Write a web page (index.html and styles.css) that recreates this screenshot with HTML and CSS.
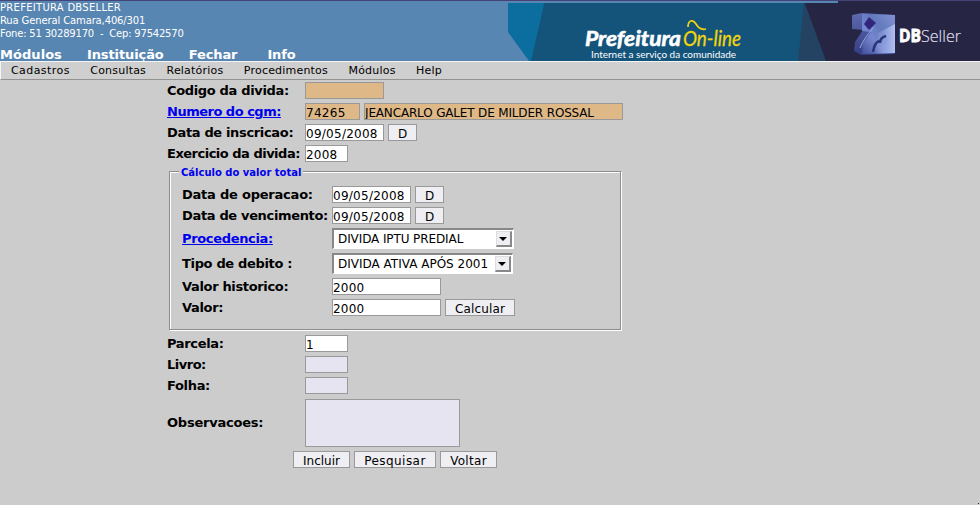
FILE: index.html
```html
<!DOCTYPE html>
<html lang="pt-BR">
<head>
<meta charset="utf-8">
<title>Prefeitura On-line</title>
<link rel="stylesheet" href="styles.css">
</head>
<body>
<header class="header">
  <div class="info">
    <div class="address"><span class="city">PREFEITURA DBSELLER</span><span class="street">Rua General Camara,406/301</span><span class="phone">Fone: 51 30289170 &nbsp;- &nbsp;Cep: 97542570</span></div>
    <nav class="main-nav"><a>Módulos</a><a>Instituição</a><a>Fechar</a><a>Info</a></nav>
  </div>
  <svg class="banner" width="472" height="61" viewBox="508 0 472 61">
    <defs>
      <linearGradient id="cube" x1="0" y1="1" x2="1" y2="0"><stop offset="0" stop-color="#434f9c"/><stop offset=".35" stop-color="#7587cf"/><stop offset=".6" stop-color="#6279bd"/><stop offset="1" stop-color="#8292d2"/></linearGradient>
      <linearGradient id="front" x1="0" y1="0" x2="1" y2="0"><stop offset="0" stop-color="#a9bcf0" stop-opacity="0"/><stop offset="1" stop-color="#b2c0f2"/></linearGradient>
      <linearGradient id="side" x1="0" y1="0" x2="0" y2="1"><stop offset="0" stop-color="#5d6ab0"/><stop offset="1" stop-color="#343e84"/></linearGradient>
      <filter id="soft"><feGaussianBlur stdDeviation=".7"/></filter>
    </defs>
    <path fill="#14547b" d="M508 0h472v61H508z"/>
    <path fill="#0b6e9f" d="M508 0h37L531 61h-3L508 32z"/>
    <path fill="#5886b2" d="M508 32L529 61H508z"/>
    <path fill="#244261" d="M804 3h24v58h-30z"/>
    <path fill="#262543" d="M804 1h176v60H826z"/>
    <path fill="#444479" d="M508 0h472v1H508z"/>
    <path fill="#5886b2" d="M508 1h330v2H508z"/>
    <g filter="url(#soft)">
      <path fill="url(#side)" d="M852 15l10-2 33 2v39l-34 1-7-4 1-9 8-12-11-1z"/>
      <path fill="url(#cube)" d="M862 14l33 1v38l-33 1 1-11 8-11-9-1z"/>
      <path fill="url(#front)" d="M878 33l17-9v29l-20 1z"/>
      <path fill="#33277b" d="M869 17l7 6-7 7-5-6z"/>
      <path fill="none" stroke="#2c3479" stroke-width="2.5" d="M873 52c1-6 3-10 6-11M880 43c0-4 2-6 6-7"/>
      <path fill="none" stroke="#98a9e6" d="M860 48c3-8 8-14 14-21"/>
    </g>
    <text class="brand" x="585" y="46" textLength="96" lengthAdjust="spacingAndGlyphs">Prefeitura</text>
    <text class="online" x="683" y="46" textLength="58" lengthAdjust="spacingAndGlyphs">On-line</text>
    <path fill="none" stroke="#f2d50b" stroke-width="1.7" d="M688 27c0-7 5-8 8-3s6 6 10 5"/>
    <text class="slogan" x="591" y="58" textLength="145" lengthAdjust="spacingAndGlyphs">Internet a serviço da comunidade</text>
    <text class="db" x="899" y="42" textLength="22" lengthAdjust="spacingAndGlyphs">DB</text>
    <text class="seller" x="921" y="42" textLength="40" lengthAdjust="spacingAndGlyphs">Seller</text>
  </svg>
</header>
<nav class="menu"><a>Cadastros</a><a>Consultas</a><a>Relatórios</a><a>Procedimentos</a><a>Módulos</a><a>Help</a></nav>
<form class="form">
  <div class="row"><label>Codigo da divida:</label><input class="date locked"></div>
  <div class="row"><label class="link tight"><a>Numero do cgm:</a></label><input class="cgm locked" value="74265"><input class="name locked" value="JEANCARLO GALET DE MILDER ROSSAL"></div>
  <div class="row"><label>Data de inscricao:</label><input class="date" value="09/05/2008"><button type="button" class="pick">D</button></div>
  <div class="row"><label class="tight">Exercicio da divida:</label><input class="short" value="2008"></div>
  <section class="box">
    <h2 class="legend"><span>Cálculo do valor total</span></h2>
    <div class="row"><label class="loose">Data de operacao:</label><input class="date" value="09/05/2008"><button type="button" class="pick">D</button></div>
    <div class="row"><label>Data de vencimento:</label><input class="date" value="09/05/2008"><button type="button" class="pick">D</button></div>
    <div class="row tall"><label class="link"><a>Procedencia:</a></label><div class="select wide"><span class="iptu">DIVIDA IPTU PREDIAL</span><i class="arrow"></i></div></div>
    <div class="row tall"><label>Tipo de debito :</label><div class="select"><span>DIVIDA ATIVA APÓS 2001</span><i class="arrow"></i></div></div>
    <div class="row"><label>Valor historico:</label><input class="value" value="2000"></div>
    <div class="row"><label>Valor:</label><input class="value" value="2000"><button type="button" class="calc">Calcular</button></div>
  </section>
  <div class="row"><label>Parcela:</label><input class="short" value="1"></div>
  <div class="row"><label class="tight">Livro:</label><input class="short empty"></div>
  <div class="row"><label>Folha:</label><input class="short empty"></div>
  <div class="row notes"><label class="loose">Observacoes:</label><textarea class="empty"></textarea></div>
  <div class="actions"><button type="button" class="add">Incluir</button><button type="button" class="search">Pesquisar</button><button type="button" class="back">Voltar</button></div>
</form>
<i class="corner"></i>
</body>
</html>
```
FILE: styles.css
```css
* { box-sizing: border-box; }
body { margin: 0; height: 505px; overflow: hidden; position: relative; background: #ccc; color: #000; font: 12px/15px "DejaVu Sans", sans-serif; }
.header { height: 61px; display: flex; background: #5886b2; color: #fff; }
.info { width: 508px; border-top: 1px solid #444479; }
.address { display: flex; flex-direction: column; height: 46px; font-size: 10px; line-height: 13px; white-space: nowrap; }
.city { letter-spacing: .28px; }
.street { letter-spacing: -.13px; }
.phone { letter-spacing: -.2px; }
.main-nav { display: flex; gap: 25px; font-size: 13px; font-weight: bold; line-height: 16px; letter-spacing: -.1px; }
.main-nav a:first-child { letter-spacing: .05px; }
.main-nav a:last-child { margin-left: 5px; }
.banner { display: block; flex: none; }
.brand { font: italic bold 21px Lato, sans-serif; fill: #fff; stroke: #fff; stroke-width: .6px; }
.online { font: italic 21px Lato, sans-serif; fill: #f2d50b; stroke: #f2d50b; stroke-width: .3px; }
.slogan { font: 10px Lato, sans-serif; fill: #fff; }
.db { font: bold 17px "Open Sans", sans-serif; fill: #fff; stroke: #fff; stroke-width: .8px; }
.seller { font: 300 17px "Open Sans", sans-serif; fill: #dedee8; stroke: #dedee8; stroke-width: .2px; }
.menu { height: 19px; display: flex; gap: 20.5px; padding-left: 10px; background: #cfcfcf; border-top: 1px solid #f4f4f4; border-left: 1px solid #f4f4f4; border-bottom: 1px solid #929292; font-size: 11px; line-height: 17px; letter-spacing: .2px; }
.menu a:first-child { letter-spacing: .43px; }
.form { width: 456px; margin-left: 167px; }
.row { display: flex; align-items: center; gap: 4px; height: 21px; }
label { width: 134px; flex: none; font-size: 13px; font-weight: bold; letter-spacing: -.34px; white-space: nowrap; }
.tight { letter-spacing: -.5px; }
.loose { letter-spacing: -.22px; }
.link { color: #00e; text-decoration: underline; }
input, textarea, button { border: 1px solid #999; border-radius: 0; margin: 0; flex: none; font: 12px "DejaVu Sans", sans-serif; outline: 0; }
input { height: 17px; padding: 2px 0 0; background: #fff; color: #000; }
button { height: 17px; padding: 3px 0 0; background: #eeeef3; color: #000; line-height: 12px; text-align: center; }
.date { width: 79px; letter-spacing: .26px; }
.cgm { width: 55px; letter-spacing: .3px; }
.name { width: 259px; letter-spacing: -.16px; }
.short { width: 43px; letter-spacing: .2px; }
.value { width: 109px; letter-spacing: .2px; }
.pick { width: 29px; }
.calc { width: 70px; letter-spacing: .15px; }
.locked { background: #deb887; }
.empty { background: #e6e4f1; }
.box { width: 452px; height: 159px; margin: 7px 0 3px 2px; padding: 0 12px; border: 1px solid #8d8d8d; box-shadow: inset 1px 1px #fff, 1px 1px #fff; }
.box label { width: 146px; }
.legend { margin: -7px 0 0 -3px; height: 19px; font-size: 10px; line-height: 15px; color: #00e; }
.legend span { display: inline-block; padding: 0 2px; background: #ccc; vertical-align: top; }
.row.tall { height: 25px; }
.select { display: flex; align-items: center; justify-content: space-between; width: 181px; height: 21px; padding-left: 4px; border: solid; border-width: 2px 1px 1px 2px; border-color: #888 #fff #fff #888; background: #fff; line-height: 15px; white-space: nowrap; }
.wide { width: 182px; }
.iptu { letter-spacing: -.1px; }
.arrow { position: relative; width: 16px; height: 16px; margin-right: 1px; background: #eeeef3; border: solid; border-width: 1px 2px 2px 1px; border-color: #ddd #888 #888 #ddd; }
.arrow::after { content: ""; position: absolute; left: 2px; top: 5px; border: solid transparent; border-width: 4px 4px 0; border-top-color: #000; }
.notes { height: 53px; }
textarea { width: 155px; height: 48px; resize: none; padding: 1px; }
.actions { display: flex; gap: 4px; margin: 2px 0 0 126px; }
.add, .back { width: 57px; }
.back { letter-spacing: .3px; }
.search { width: 82px; letter-spacing: .45px; }
.corner { position: absolute; right: 1px; bottom: 1px; width: 1px; height: 1px; background: #222; }
```
